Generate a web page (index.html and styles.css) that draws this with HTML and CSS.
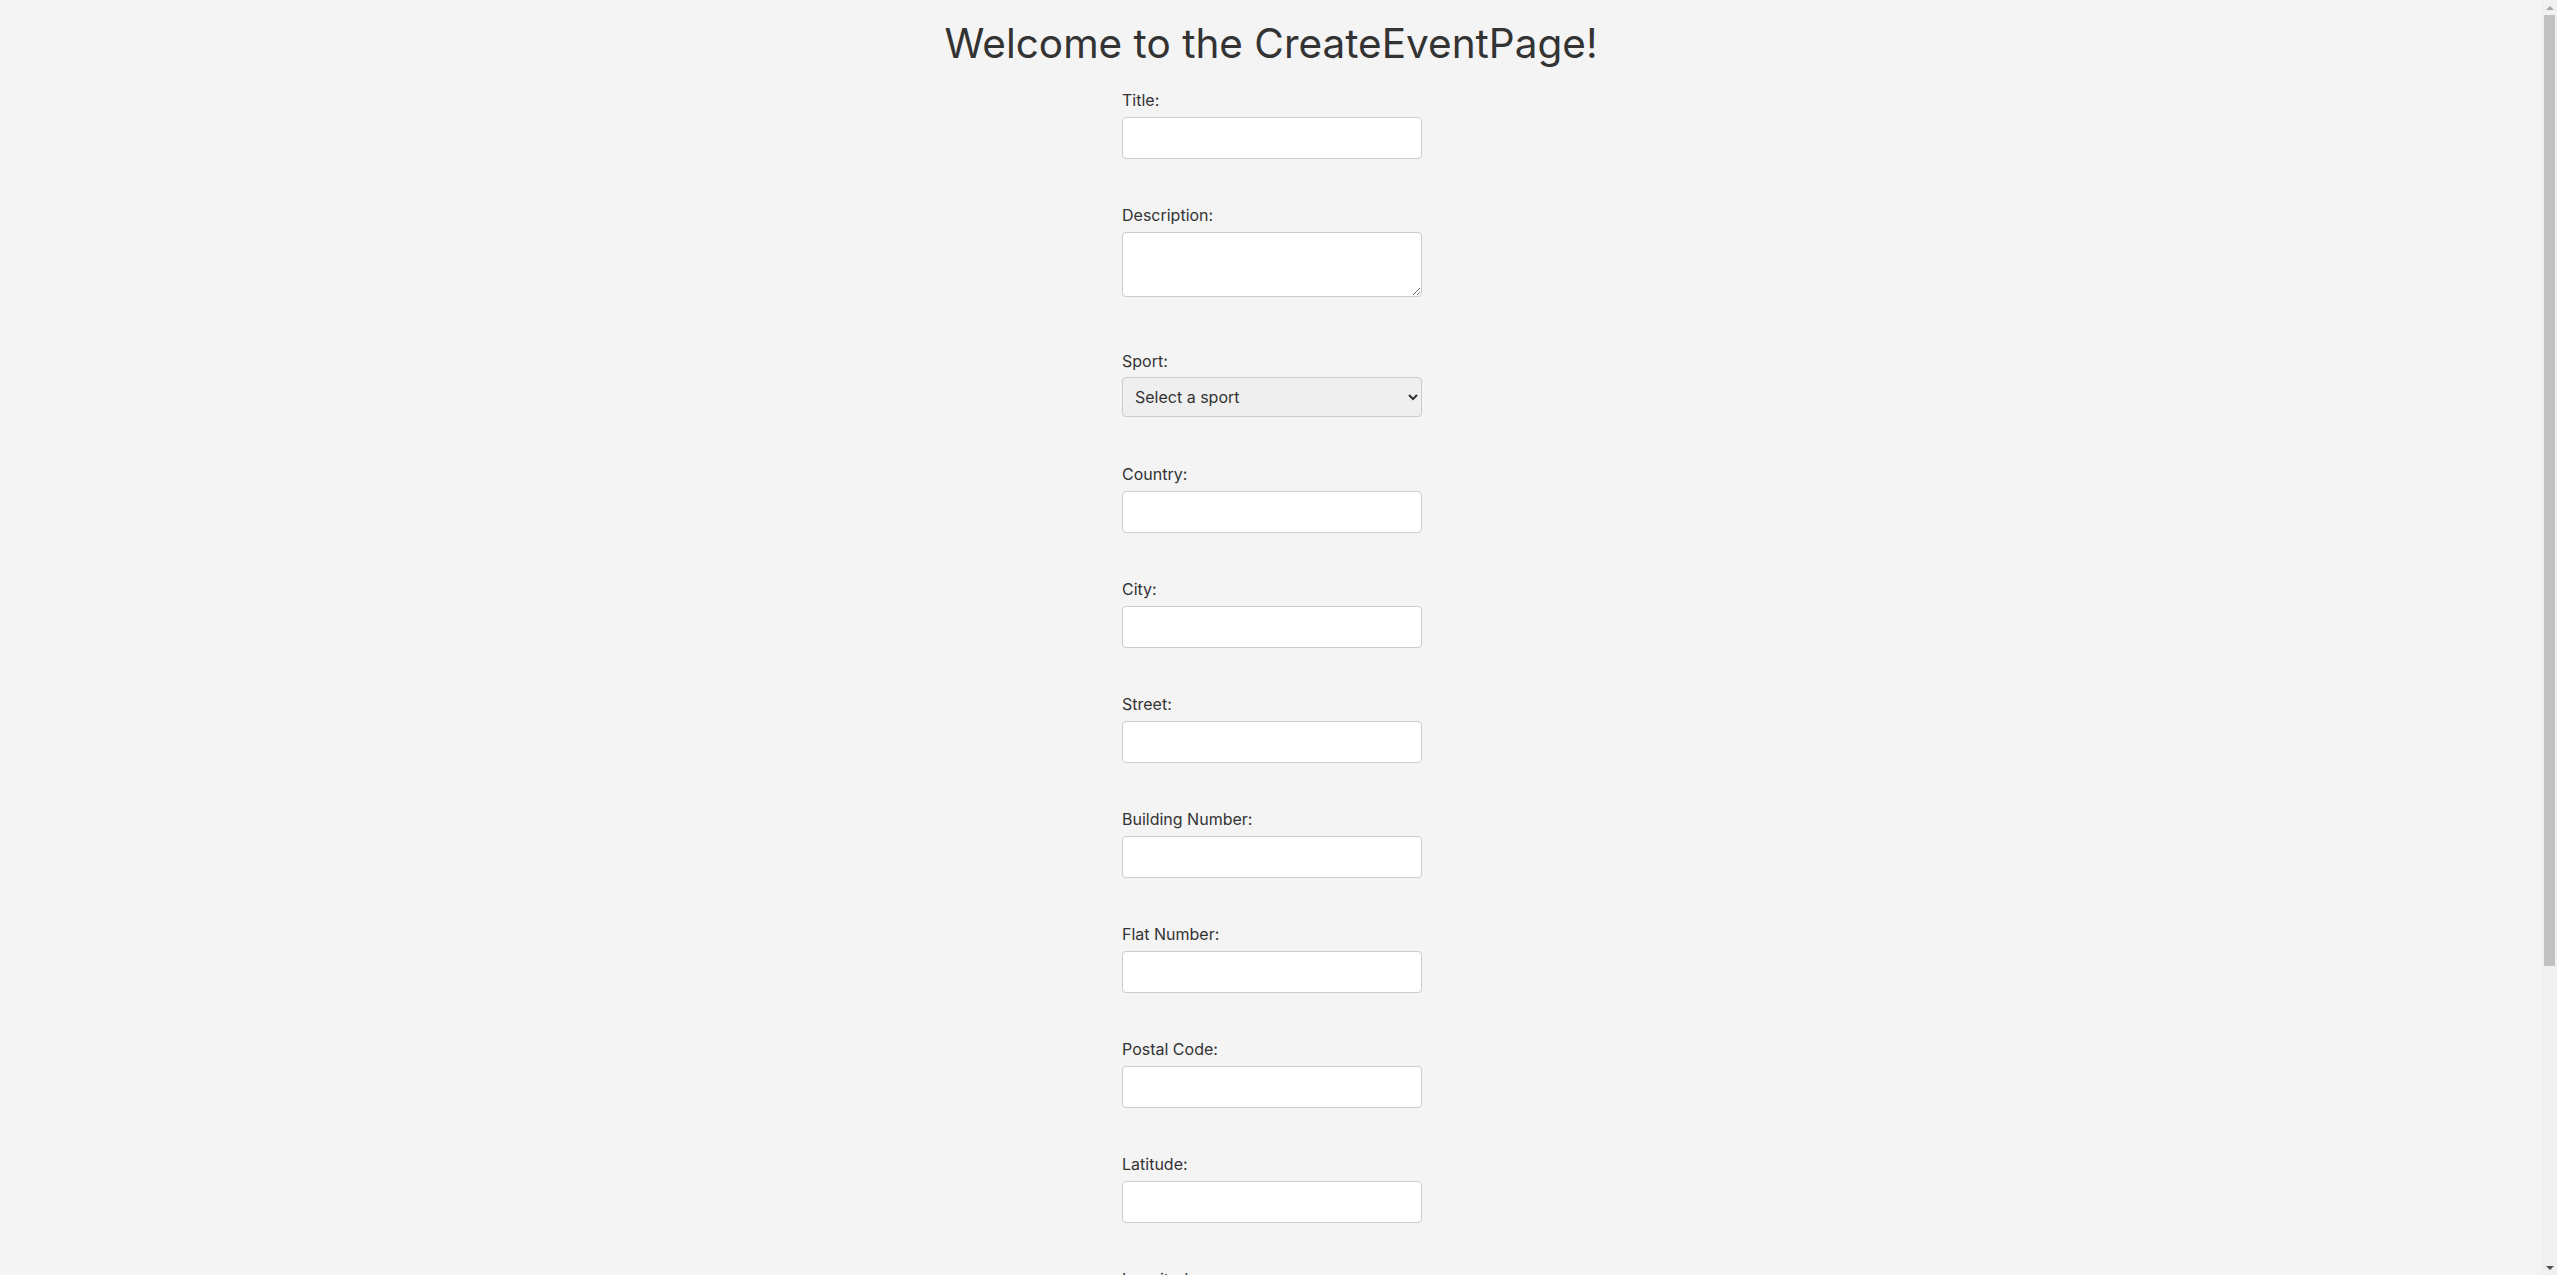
FILE: index.html
```html
<!DOCTYPE html>
<html lang="en">
<head>
<meta charset="utf-8">
<title>Create Event</title>
<link rel="stylesheet" href="styles.css">
</head>
<body>
<div class="page">
  <h1 class="page-title">Welcome to the CreateEventPage!</h1>
  <form class="event-form">
    <div class="field">
      <label class="field-label" for="title">Title:</label>
      <input class="field-input" id="title" type="text">
    </div>
    <div class="field field-area">
      <label class="field-label" for="description">Description:</label>
      <textarea class="field-textarea" id="description"></textarea>
    </div>
    <div class="field field-select">
      <label class="field-label" for="sport">Sport:</label>
      <select class="field-dropdown" id="sport">
        <option>Select a sport</option>
      </select>
    </div>
    <div class="field">
      <label class="field-label" for="country">Country:</label>
      <input class="field-input" id="country" type="text">
    </div>
    <div class="field">
      <label class="field-label" for="city">City:</label>
      <input class="field-input" id="city" type="text">
    </div>
    <div class="field">
      <label class="field-label" for="street">Street:</label>
      <input class="field-input" id="street" type="text">
    </div>
    <div class="field">
      <label class="field-label" for="building">Building Number:</label>
      <input class="field-input" id="building" type="text">
    </div>
    <div class="field">
      <label class="field-label" for="flat">Flat Number:</label>
      <input class="field-input" id="flat" type="text">
    </div>
    <div class="field">
      <label class="field-label" for="postal">Postal Code:</label>
      <input class="field-input" id="postal" type="text">
    </div>
    <div class="field">
      <label class="field-label" for="latitude">Latitude:</label>
      <input class="field-input" id="latitude" type="text">
    </div>
    <div class="field">
      <label class="field-label" for="longitude">Longitude:</label>
      <input class="field-input" id="longitude" type="text">
    </div>
    <div class="field">
      <label class="field-label" for="date">Date:</label>
      <input class="field-input" id="date" type="text">
    </div>
    <div class="field">
      <label class="field-label" for="participants">Max Participants:</label>
      <input class="field-input" id="participants" type="text">
    </div>
    <button class="submit-btn" type="button">Create Event</button>
  </form>
</div>
<div class="scrollbar" aria-hidden="true">
  <div class="sb-arrow sb-up"><span class="sb-tri sb-tri-up"></span></div>
  <div class="sb-track"><div class="sb-thumb"></div></div>
  <div class="sb-arrow sb-down"><span class="sb-tri sb-tri-down"></span></div>
</div>
</body>
</html>
```
FILE: styles.css
```css
html, body {
  margin: 0;
  padding: 0;
}

body {
  background: #f4f4f4;
  color: #333333;
  font-family: Inter, "Noto Sans", "Liberation Sans", sans-serif;
  padding-right: 15px;
}

.page {
  padding: 20px 0 8px;
}

.page-title {
  margin: 0 0 23px;
  text-align: center;
  font-size: 40.5px;
  line-height: 48px;
  font-weight: 400;
  color: #333333;
}

.event-form {
  width: 300px;
  margin: 0 auto;
  position: relative;
  left: 1px;
}

.field {
  display: flex;
  flex-direction: column;
  padding-bottom: 47px;
}

.field-label {
  font-size: 16px;
  line-height: 19px;
  margin-bottom: 7px;
  color: #333333;
}

.field-input,
.field-textarea,
.field-dropdown {
  box-sizing: border-box;
  width: 300px;
  border: 1px solid #cccccc;
  border-radius: 4px;
  font-family: inherit;
  font-size: 16px;
  margin: 0;
}

.field-input {
  height: 42px;
  padding: 10px;
  background: #ffffff;
}

.field-area {
  padding-bottom: 55px;
}

.field-textarea {
  height: 65px;
  padding: 10px;
  background: #ffffff;
  resize: vertical;
}

.field-select {
  padding-bottom: 48px;
}

.field-select .field-label {
  margin-bottom: 6px;
}

.field-dropdown {
  height: 40px;
  padding: 0 8px;
  background-color: #efefef;
  color: #333333;
}

.submit-btn {
  display: block;
  width: 300px;
  height: 42px;
  border: none;
  border-radius: 4px;
  background: #333333;
  color: #ffffff;
  font-family: inherit;
  font-size: 16px;
}

/* simulated classic browser scrollbar */
.scrollbar {
  position: fixed;
  top: 0;
  right: 0;
  width: 15px;
  height: 100vh;
  background: #f1f1f1;
  display: flex;
  flex-direction: column;
}

.sb-arrow {
  height: 15px;
  flex: 0 0 15px;
  display: flex;
  align-items: center;
  justify-content: center;
}

.sb-tri {
  width: 0;
  height: 0;
  border-left: 4px solid transparent;
  border-right: 4px solid transparent;
}

.sb-tri-up {
  border-bottom: 4px solid #a3a3a3;
}

.sb-tri-down {
  border-top: 4px solid #505050;
}

.sb-track {
  flex: 1;
  padding: 0 2px;
}

.sb-thumb {
  height: 951px;
  background: #c1c1c1;
}
```
